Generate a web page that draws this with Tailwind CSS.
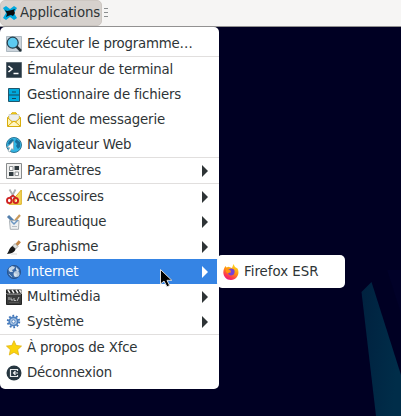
<!DOCTYPE html>
<html lang="fr">
<head>
<meta charset="utf-8">
<title>Applications</title>
<script src="https://cdn.jsdelivr.net/npm/@tailwindcss/browser@4"></script>
</head>
<body class="w-[401px] h-[416px] overflow-hidden bg-[#000023] font-['DejaVu_Sans',sans-serif] text-[13.33px] leading-[25px] text-[#2e3436] relative [font-variant-ligatures:none]">
<!-- wallpaper -->
<svg class="absolute left-0 top-0" width="401" height="416" viewBox="0 0 401 416">
  <defs><linearGradient id="w" x1="0" y1="0" x2="1" y2="0.3"><stop offset="0" stop-color="#00213f"/><stop offset="1" stop-color="#002d49"/></linearGradient></defs>
  <path d="M361.500 292L371.500 282L401 375V416H376Z" fill="url(#w)"/>
  <path d="M387 270L401 314V270Z" fill="#010128"/>
</svg>
<div class="relative flex flex-col">
  <header class="flex h-[27px] bg-[#f6f5f4] border-b border-[#929191]">
    <div class="flex items-center w-[102px] h-[26px] bg-[#d6d1cd] border border-[#cdc7c2] rounded-[5px] whitespace-nowrap">
      <svg class="ml-px shrink-0" width="16" height="16" viewBox="0 0 16 16"><path d="M1 3L4 1L8 4L12 1L15 3L12 8L15 13L12 15L8 12L4 15L1 13L4 8Z" fill="#00a9df"/><path d="M3 5L5 6L10 5L13 4L12 6L13 8L11 11L9 10L6 11L4 12L5 9Z" fill="#080b0d"/></svg>
      <span class="ml-[2px] self-start leading-[23px] tracking-[-0.1px]">Applications</span>
    </div>
    <div class="ml-[2px] mt-[8px] flex flex-col gap-[3px]"><i class="w-1 h-px bg-[#8b8e8f]"></i><i class="w-1 h-px bg-[#8b8e8f]"></i><i class="w-1 h-px bg-[#8b8e8f]"></i></div>
  </header>
  <nav class="w-[219px] h-[362px] bg-white rounded-[5px] py-1 [&>div]:flex [&>div]:items-center [&>div]:h-[25px] [&>div]:pl-[6px] [&>div]:pr-[11px] [&>div]:whitespace-nowrap [&>div>svg]:shrink-0 [&>div>span]:ml-[5px] [&>div>span]:flex-1 [&>hr]:border-0 [&>hr]:h-px [&>hr]:bg-[#e1dfde]">
    <div>
      <svg width="16" height="16" viewBox="0 0 16 16"><path d="M.5 .5H15.500V15.500H.5Z" fill="#cbd4dc" stroke="#aeb9c1"/><path d="M10 10L15 15" stroke="#263238" stroke-width="2.500"/><circle cx="6.700" cy="6.700" r="5.500" fill="#5ccaf0" stroke="#263f4c" stroke-width="1.200"/></svg>
      <span class="tracking-[-0.23px]">Exécuter le programme…</span>
    </div>
    <hr>
    <div>
      <svg width="16" height="16" viewBox="0 0 16 16"><path d="M.5 .5H15.500V15.500H.5Z" fill="#263642" stroke="#5c6971"/><path d="M2.500 4L6 7L2.500 10M7.500 11.500H12.500" fill="none" stroke="#fff" stroke-width="1.600"/></svg>
      <span class="tracking-[-0.18px]">Émulateur de terminal</span>
    </div>
    <div>
      <svg width="16" height="16" viewBox="0 0 16 16"><path d="M2.500 1.500H13.500V14.500H2.500Z" fill="#00aade" stroke="#20566c"/><path d="M3 8H13M6 5H10M6 11.500H10" stroke="#17485c" stroke-width="1.200"/></svg>
      <span class="tracking-[-0.18px]">Gestionnaire de fichiers</span>
    </div>
    <div>
      <svg width="16" height="16" viewBox="0 0 16 16"><path d="M1.500 5.500L5 2.500L6 .8H10L11 2.500L14.500 5.500V14.500H1.500Z" fill="#f5d019" stroke="#d8ad0c"/><path d="M3 2.500H13V9H3Z" fill="#eceeed" stroke="#bfc0bb" stroke-width=".6"/><path d="M2 6L6 10L2 14ZM14 6L10 10L14 14Z" fill="#fff4b0"/><path d="M2 14L7 9.500H9L14 14M2 6L6.500 10M14 6L9.500 10" fill="#fff6c2" stroke="#ddae10"/></svg>
      <span class="tracking-[-0.15px]">Client de messagerie</span>
    </div>
    <div>
      <svg width="16" height="16" viewBox="0 0 16 16"><circle cx="8" cy="8" r="7.500" fill="#31b6e5" stroke="#2f7594"/><path d="M3 4L6 2L8 3L6 5L7 7L4 8L2 7ZM10 2L14 5L14 10L12 12L10 9L11 7L9 5Z" fill="#196e9c"/><path d="M7.500 4V13L5.800 11.500L3.800 15L2 14L3.700 10.700L1 10.500Z" fill="#fff" stroke="#83939b" stroke-width=".6"/></svg>
      <span class="tracking-[-0.2px]">Navigateur Web</span>
    </div>
    <hr>
    <div>
      <svg width="16" height="16" viewBox="0 0 16 16"><path d="M.5 .5H15.500V15.500H.5Z" fill="#f1f1f0" stroke="#888b8c"/><path d="M3.500 3.500H7V7.500H3.500ZM9 9H12.500V12.500H9Z" fill="#fff" stroke="#8c9092"/><path d="M8.500 3H13V7H8.500ZM3 9H7.500V13H3Z" fill="#303b40"/></svg>
      <span class="tracking-[-0.2px]">Paramètres</span><svg width="6" height="12" viewBox="0 0 6 12"><path d="M0 0L6 6L0 12Z" fill="#2e3436"/></svg>
    </div>
    <hr>
    <div>
      <svg width="16" height="16" viewBox="0 0 16 16"><path d="M15.300 1V15.300H3Z" fill="#f6d65a" stroke="#d9af22"/><path d="M12.500 9V12.500H9Z" fill="#fff"/><path d="M3.500 .5L8.800 9.500M9.500 .5L4.800 9.500" stroke="#aeb4b4" stroke-width="1.800"/><ellipse cx="3.300" cy="11.500" rx="2.300" ry="2.600" fill="none" stroke="#cf2020" stroke-width="1.900"/><ellipse cx="9.800" cy="11.500" rx="2.300" ry="2.600" fill="none" stroke="#cf2020" stroke-width="1.900"/><path d="M4 8.500L7 6.500L9.500 8.500" fill="none" stroke="#cf2020" stroke-width="1.600"/></svg>
      <span class="tracking-[-0.08px]">Accessoires</span><svg width="6" height="12" viewBox="0 0 6 12"><path d="M0 0L6 6L0 12Z" fill="#2e3436"/></svg>
    </div>
    <div>
      <svg width="16" height="16" viewBox="0 0 16 16"><path d="M2 2L8 8" stroke="#547fac" stroke-width="3"/><path d="M14 1L8 8" stroke="#c99a5c" stroke-width="2.200"/><path d="M3.500 6.500H13L12.500 15.300H4.300Z" fill="#eef0f1" stroke="#a9b0b5"/><path d="M5 7L8 10L12 6" fill="none" stroke="#6c97c3" stroke-width="1.500"/><path d="M6 12.500H11" stroke="#b7bec5"/></svg>
      <span class="tracking-[-0.23px]">Bureautique</span><svg width="6" height="12" viewBox="0 0 6 12"><path d="M0 0L6 6L0 12Z" fill="#2e3436"/></svg>
    </div>
    <div>
      <svg width="16" height="16" viewBox="0 0 16 16"><path d="M13.800 2.200L10.500 6" stroke="#c28649" stroke-width="3"/><path d="M9 4.500L12 7.500L9.500 10L6.500 7Z" fill="#dfe1df" stroke="#888a85" stroke-width=".7"/><path d="M6.500 7L9.500 10C9 13 6 14.500 1 15C3 12.500 3 9 6.500 7Z" fill="#17191a"/><path d="M5 15H11" stroke="#d4d5d4"/></svg>
      <span class="tracking-[-0.16px]">Graphisme</span><svg width="6" height="12" viewBox="0 0 6 12"><path d="M0 0L6 6L0 12Z" fill="#2e3436"/></svg>
    </div>
    <div class="bg-[#3584e4] text-white">
      <svg width="16" height="16" viewBox="0 0 16 16"><circle cx="8" cy="8" r="6.600" fill="#3968a5" stroke="#29558f"/><path d="M3 4L6 2L9 3L8 5L6 6L7 8L4 8L2.500 6ZM10 3L13 6L12 8L10 6ZM8 9L11 10L10 13L8 12Z" fill="#c7d7e8"/><circle cx="10.500" cy="10" r="3" fill="#dce7ef" opacity=".75"/><path d="M3 10L6 13" stroke="#8eafd3"/></svg>
      <span class="tracking-[-0.2px]">Internet</span><svg width="6" height="12" viewBox="0 0 6 12"><path d="M0 0L6 6L0 12Z" fill="#fff"/></svg>
    </div>
    <div>
      <svg width="16" height="16" viewBox="0 0 16 16"><path d="M.5 5H15.500V15.500H.5Z" fill="#3b3c3c" stroke="#242525"/><path d="M0 .5H15.500V4.500H0Z" fill="#252626"/><path d="M2 1L4 4M6 1L8 4M10 1L12 4M13.500 1L15 3.500" stroke="#eee" stroke-width="1.500"/><path d="M1 5.500H15" stroke="#777"/><path d="M3 8V11M5 8.500V11H7M8 9V11.500H10M11 12L13 8" fill="none" stroke="#ddd" stroke-width=".8"/><path d="M3 13.500H13" stroke="#555"/></svg>
      <span class="tracking-[-0.04px]">Multimédia</span><svg width="6" height="12" viewBox="0 0 6 12"><path d="M0 0L6 6L0 12Z" fill="#2e3436"/></svg>
    </div>
    <div>
      <svg width="16" height="16" viewBox="0 0 16 16"><circle cx="7.500" cy="7.500" r="5.700" fill="none" stroke="#3f74b8" stroke-width="2" stroke-dasharray="1.790 1.790"/><circle cx="7.500" cy="7.500" r="4.200" fill="#b0c9e6" stroke="#4c80bf" stroke-width="1.800"/><circle cx="7.500" cy="7.500" r="1.700" fill="#fff" stroke="#4c80bf"/></svg>
      <span class="tracking-[-0.15px]">Système</span><svg width="6" height="12" viewBox="0 0 6 12"><path d="M0 0L6 6L0 12Z" fill="#2e3436"/></svg>
    </div>
    <hr>
    <div>
      <svg width="16" height="16" viewBox="0 0 16 16"><path d="M8 .7L10.200 5.500L15.500 6.100L11.600 9.700L12.700 15L8 12.300L3.300 15L4.400 9.700L.5 6.100L5.800 5.500Z" fill="#fbd40b" stroke="#dfb313" stroke-width=".8"/></svg>
      <span class="tracking-[-0.18px]">À propos de Xfce</span>
    </div>
    <div>
      <svg width="16" height="16" viewBox="0 0 16 16"><circle cx="8" cy="8" r="7.500" fill="#263640"/><path d="M11.500 6V4.500H4.500V11.500H11.500V10M12 8H7.500M9.500 6L7.500 8L9.500 10" fill="none" stroke="#e9eced" stroke-width="1.200"/></svg>
      <span class="tracking-[-0.17px]">Déconnexion</span>
    </div>
  </nav>
</div>
<!-- Internet submenu -->
<div class="absolute left-[217px] top-[255px] w-[128px] h-[33px] rounded-[5px] bg-white flex items-center pl-[6px] whitespace-nowrap">
  <svg width="16" height="16" viewBox="0 0 16 16"><defs><linearGradient id="f" x1=".8" y1="0" x2=".3" y2="1"><stop offset="0" stop-color="#ffe226"/><stop offset=".45" stop-color="#ff980e"/><stop offset=".8" stop-color="#ff3750"/><stop offset="1" stop-color="#e31587"/></linearGradient></defs><path d="M1.300 4L2.500 2L3.500 3.500L5.500 2.800L9 4L10.500 0L12 3L14.500 4.500C17 9 14.500 15.700 8 16C2 16-1.500 10 1.300 4Z" fill="url(#f)"/><path d="M5 5.500L8 4.500C11.500 4.500 12.500 7.500 11 10C9 12.500 5.500 11.500 5 9L8 8.500L7.500 7Z" fill="#7542d8"/><path d="M3 5L6 5.500L8 7L6 8.500L5 9.500L3 8Z" fill="#ff980e"/></svg>
  <span class="ml-[5px]">Firefox ESR</span>
</div>
<!-- pointer -->
<svg class="absolute left-[159px] top-[268px]" width="15" height="20" viewBox="0 0 15 20"><path d="M1.500 1.500V16L5 13L8 18.800L10.600 17.500L8 12.300H12.800Z" fill="#000" stroke="#ddd" stroke-width="1"/></svg>
</body>
</html>
